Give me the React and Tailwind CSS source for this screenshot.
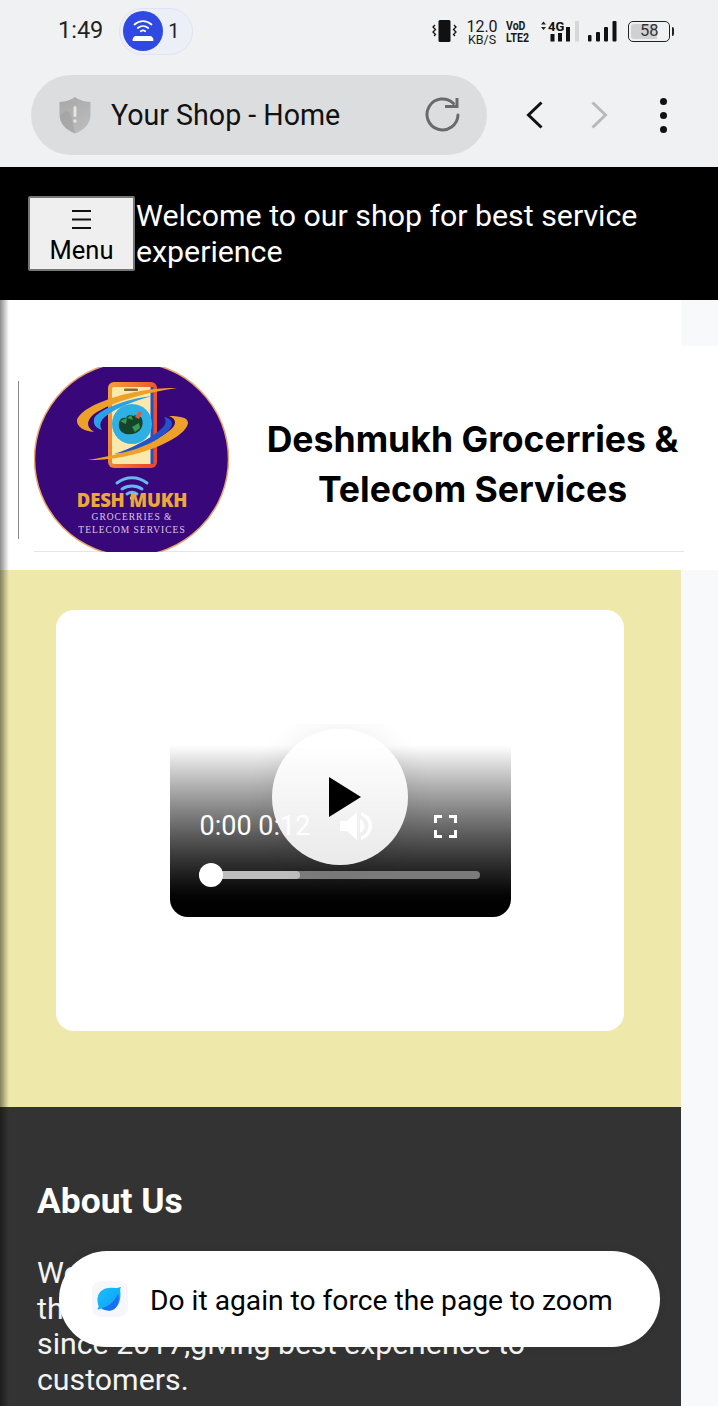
import React from "react";

function WifiPill() {
  return (
    <div className="ml-[16px] flex h-[47px] w-[74px] items-center rounded-full border border-[#dfe3f4] bg-[#eceef8] pl-[3px]">
      <div className="flex h-[40px] w-[40px] items-center justify-center rounded-full bg-[#2f49e2]">
        <svg width="26" height="26" viewBox="0 0 26 26" fill="none">
          <path d="M4.500 6.500c5-4.400 12-4.400 17 0" stroke="#fff" strokeWidth="1.800" strokeLinecap="round" />
          <path d="M7.800 10c3.100-2.600 7.300-2.600 10.400 0" stroke="#fff" strokeWidth="1.800" strokeLinecap="round" />
          <path d="M10.800 13.200c1.400-1 3-1 4.400 0" stroke="#fff" strokeWidth="1.800" strokeLinecap="round" />
          <path d="M5.500 18h15c1.500 0 3 2.500 3 4.200 0 .6-.5.8-1 .8H3.500c-.5 0-1-.2-1-.8C2.500 20.500 4 18 5.500 18z" fill="#fff" />
        </svg>
      </div>
      <span className="ml-[5px] text-[20px] leading-none text-[#222]">1</span>
    </div>
  );
}

function StatusIcons() {
  return (
    <div className="ml-auto mr-[44px] flex items-center text-[#1a1a1a]">
      <svg width="25" height="24" viewBox="0 0 25 24" fill="none">
        <rect x="6.500" y="1" width="12" height="22" rx="1.500" fill="#111" />
        <path d="M3 6l-2 2 2.500 2.500L1 13l2.500 2.500L2 17" stroke="#111" strokeWidth="1.300" />
        <path d="M22 6l2 2-2.500 2.500L24 13l-2.500 2.500L23 17" stroke="#111" strokeWidth="1.300" />
      </svg>
      <div className="ml-[10px] flex w-[30px] translate-y-[1px] flex-col items-center text-center">
        <span className="text-[16px] leading-[14px]">12.0</span>
        <span className="text-[12.500px] leading-[11px]">KB/S</span>
      </div>
      <div className="ml-[9px] flex w-[26px] flex-col font-bold">
        <span className="origin-left scale-x-[0.78] text-[13.500px] leading-[12px]">VoD</span>
        <span className="origin-left scale-x-[0.78] text-[13.500px] leading-[12px]">LTE2</span>
      </div>
      <svg className="ml-[6px]" width="80" height="24" viewBox="539 19 80 24">
        <path d="M542 24.500l2.500-3 2.500 3zM542 27l2.500 3 2.500-3z" fill="#222" />
        <text x="549" y="31" fontSize="13" fontWeight="700" fill="#111" fontFamily="Roboto, sans-serif">4G</text>
        <rect x="551.500" y="34" width="4" height="7.500" fill="#111" />
        <rect x="559" y="33" width="4" height="8.500" fill="#111" />
        <rect x="567" y="27" width="4" height="14.500" fill="#111" />
        <rect x="576" y="21" width="4" height="20.500" fill="#d6d7d9" />
        <rect x="589" y="35" width="3.500" height="6.500" rx="1" fill="#111" />
        <rect x="597" y="32" width="4" height="9.500" rx="1" fill="#111" />
        <rect x="605" y="27" width="4" height="14.500" rx="1" fill="#111" />
        <rect x="613.500" y="21" width="4" height="20.500" rx="1" fill="#111" />
      </svg>
      <div className="ml-[10px] flex items-center">
        <div className="flex h-[21px] w-[42px] items-center rounded-[5px] border border-[#222] p-[2px]">
          <div className="flex h-full w-[26px] items-center rounded-l-[3px] bg-[#d0d1d3]">
            <span className="ml-[9px] text-[16.500px] leading-none text-[#333]">58</span>
          </div>
        </div>
        <div className="ml-[2px] h-[9px] w-[2px] rounded-r-full bg-[#222]" />
      </div>
    </div>
  );
}

function BrowserBar() {
  return (
    <div className="h-[167px] bg-[#f0f1f3]">
      <div className="flex h-[62px] items-center pl-[58px]">
        <span className="text-[23.500px] leading-none text-[#222]">1:49</span>
        <WifiPill />
        <StatusIcons />
      </div>
      <div className="mt-[13px] flex items-center">
        <div className="ml-[31px] flex h-[80px] w-[456px] items-center rounded-full bg-[#dcdddf] pl-[27px] pr-[26px]">
          <svg width="34" height="38" viewBox="0 0 34 38">
            <defs>
              <linearGradient id="shieldFill" x1="0.2" y1="0" x2="0.8" y2="1">
                <stop offset="0" stopColor="#a9a9a9" />
                <stop offset="1" stopColor="#bdbdbd" />
              </linearGradient>
            </defs>
            <path d="M17 1c4 3 9 4.500 15.500 5v13c0 9-7 15.500-15.500 18.500C8.500 34.500 1.500 28 1.500 19V6C8 5.500 13 4 17 1z" fill="url(#shieldFill)" />
            <path d="M2 20c5-6 8-6 10-2s3 11 5 19c-8-3-14-8-15-17z" fill="#989898" opacity="0.45" />
            <rect x="15.500" y="10" width="3" height="11" rx="1.500" fill="#e4e4e4" />
            <circle cx="17" cy="25" r="1.800" fill="#e4e4e4" />
          </svg>
          <span className="ml-[19px] text-[28.600px] leading-none text-[#111]">Your Shop - Home</span>
          <svg className="ml-auto" width="36" height="36" viewBox="0 0 36 36" fill="none">
            <path d="M28.500 6.500A15.500 15.500 0 1 0 33 18" stroke="#6a6a6a" strokeWidth="3" strokeLinecap="round" />
            <path d="M20 9.500h12V1" stroke="#6a6a6a" strokeWidth="3" />
          </svg>
        </div>
        <svg className="ml-[39px]" width="18" height="28" viewBox="0 0 18 28" fill="none">
          <path d="M15.500 1.500 2.500 14l13 12.500" stroke="#111" strokeWidth="3" />
        </svg>
        <svg className="ml-[46px]" width="18" height="28" viewBox="0 0 18 28" fill="none">
          <path d="M2.500 1.500 15.500 14l-13 12.500" stroke="#b9b9b9" strokeWidth="3" />
        </svg>
        <div className="ml-[52px] flex flex-col gap-[7px]">
          <div className="h-[7px] w-[7px] rounded-full bg-[#111]" />
          <div className="h-[7px] w-[7px] rounded-full bg-[#111]" />
          <div className="h-[7px] w-[7px] rounded-full bg-[#111]" />
        </div>
      </div>
    </div>
  );
}

function TopHeader() {
  return (
    <div className="flex h-[133px] items-start bg-black pl-[28px] pt-[29px]">
      <button className="flex h-[75px] w-[107px] flex-col items-center rounded-[2px] border-2 border-[#767676] bg-[#efefef] pt-[12px] text-[25.500px] leading-[30px] text-black">
        <svg width="19" height="19" viewBox="0 0 19 19">
          <path d="M0 1h19M0 9.500h19M0 18h19" stroke="#111" strokeWidth="2" />
        </svg>
        <span className="mt-[6px]">Menu</span>
      </button>
      <p className="ml-px mt-[2px] w-[560px] text-[30.300px] leading-[36px] text-white">
        Welcome to our shop for best service experience
      </p>
    </div>
  );
}

function Logo() {
  return (
    <svg width="195" height="185" viewBox="0 0 195 185" className="shrink-0">
      <defs>
        <clipPath id="logoClip">
          <rect x="0" y="0" width="195" height="185" />
        </clipPath>
        <linearGradient id="phoneFrame" x1="0" y1="0" x2="1" y2="0.4">
          <stop offset="0" stopColor="#f2a23a" />
          <stop offset="1" stopColor="#ef4a2c" />
        </linearGradient>
      </defs>
      <g clipPath="url(#logoClip)">
        <circle cx="97.500" cy="92" r="97" fill="#38087a" stroke="#e8a468" strokeWidth="1.500" />
        <rect x="74" y="15" width="49" height="86" rx="6" fill="url(#phoneFrame)" />
        <rect x="78" y="20" width="41" height="77" rx="2" fill="#fbe9ac" />
        <rect x="116.500" y="20" width="3" height="77" fill="#2452c8" />
        <rect x="90" y="21.500" width="14" height="2.500" rx="1" fill="#8a6a30" />
        <circle cx="98" cy="57" r="20" fill="#2fb0e4" />
        <path d="M85 60c-1-7 3-10 7-9 1-3 5-4 7-2 4-2 8 0 9 3 2 6-1 12-6 14-7 3-16 1-17-6z" fill="#14452c" />
        <path d="M86 54l7-3-1 6zM93 51l4-3 2 5zM98 60l7-4 1 5-5 4z" fill="#3c9a50" />
        <path d="M101 50l4-6 3 2-3 6z" fill="#d9603a" />
        <path d="M143 21C100 20 45 38 43 54c0 6 7 10 17 11-8-5-8-11 0-18 18-12 50-21 83-26z" fill="#eda02a" />
        <path d="M118 29C90 32 62 44 60 52c-1 6 2 9 8 11-3-5-2-9 4-14 12-9 28-15 46-20z" fill="#2c9fe8" />
        <path d="M54 93c46 1 98-21 100-37 0-5-6-7-19-7 8 3 8 9 0 15-17 13-47 24-81 29z" fill="#eda02a" />
        <path d="M80 87c25-3 52-17 57-27 3-5-1-9-7-10 3 4 2 8-4 13-12 10-28 18-46 24z" fill="#2452c8" />
        <g fill="none" stroke="#68b8f0" strokeWidth="3" strokeLinecap="round">
          <path d="M83 116c9-7 21-7 30 0" />
          <path d="M88 122c6-4 14-4 20 0" />
          <path d="M93 127c3-2 7-2 10 0" />
        </g>
        <circle cx="98" cy="131" r="2" fill="#ffffff" />
        <text x="98" y="140" textAnchor="middle" fontSize="18.500" fontWeight="800" fill="#eda63a" fontFamily="'Open Sans', sans-serif" letterSpacing="-0.2">DESH MUKH</text>
        <text x="98" y="153" textAnchor="middle" fontSize="9.500" fill="#d8c8e8" fontFamily="'Liberation Serif', serif" letterSpacing="1">GROCERRIES &amp;</text>
        <text x="98" y="165.500" textAnchor="middle" fontSize="9.500" fill="#d8c8e8" fontFamily="'Liberation Serif', serif" letterSpacing="1">TELECOM SERVICES</text>
      </g>
    </svg>
  );
}

function BrandBanner() {
  return (
    <div className="h-[270px] bg-white">
      <div className="flex h-[46px]">
        <div className="w-[681px] bg-white" />
        <div className="flex-1 bg-[#f8f9fa]" />
      </div>
      <div className="mt-[21px] flex items-center pl-[18px]">
        <div className="h-[158px] w-px bg-[#8a8a8a]" />
        <div className="ml-[15px] flex h-[185px] w-[650px] items-center border-b border-[#e5e6e8]">
          <Logo />
          <h1 className="ml-[16px] mt-[12px] w-[455px] shrink-0 text-center font-['Inter',sans-serif] text-[35.600px] font-bold leading-[50px] text-black">
            Deshmukh Grocerries &amp; Telecom Services
          </h1>
        </div>
      </div>
    </div>
  );
}

function VideoPlayer() {
  return (
    <div className="relative flex h-[193px] w-[341px] flex-col overflow-hidden rounded-b-[18px] bg-gradient-to-b from-white from-[11%] to-black to-[99%] text-white">
      <div className="mt-[88px] flex h-[28px] items-center pl-[30px]">
        <span className="text-[27px] leading-none">0:00 0:12</span>
        <svg className="ml-[30px]" width="33" height="30" viewBox="0 0 33 30" fill="#fff">
          <path d="M0 10h7l10-9v28l-10-9H0z" />
          <path d="M20 8c3 2 4.500 4.500 4.500 7s-1.500 5-4.500 7z" />
          <path d="M21 1c7 2 11 8 11 14s-4 12-11 14v-3.500c5-2 7.500-6 7.500-10.500S26 6.500 21 4.500z" />
        </svg>
        <svg className="ml-[61px]" width="23" height="23" viewBox="0 0 23 23" fill="none">
          <path d="M1.500 8V1.500H8M15 1.500h6.500V8M21.500 15v6.500H15M8 21.500H1.500V15" stroke="#fff" strokeWidth="3" />
        </svg>
      </div>
      <div className="mt-[23px] flex h-[24px] items-center pl-[29px]">
        <div className="relative h-[8px] w-[281px] rounded-full bg-[#7b7b7b]">
          <div className="h-full w-[101px] rounded-full bg-[#bdbdbd]" />
          <div className="absolute left-0 top-[-8px] h-[24px] w-[24px] rounded-full bg-white" />
        </div>
      </div>
      <div className="absolute left-[102px] top-[5px] flex h-[136px] w-[136px] items-center justify-center rounded-full bg-white/90 shadow-[0_0_30px_rgba(0,0,0,0.07)]">
        <svg className="ml-[10px]" width="32" height="40" viewBox="0 0 32 40">
          <path d="M0 0l32 20L0 40z" fill="#000" />
        </svg>
      </div>
    </div>
  );
}

function VideoSection() {
  return (
    <section className="h-[537px] bg-[#eee8aa] pl-[56px] pt-[40px]">
      <div className="flex h-[421px] w-[568px] items-center justify-center rounded-[18px] bg-white">
        <VideoPlayer />
      </div>
    </section>
  );
}

function AboutSection() {
  return (
    <section className="h-[299px] bg-[#333333] pl-[37px] pt-[74px] text-white">
      <h2 className="text-[35.400px] font-bold leading-[40px]">About Us</h2>
      <p className="mt-[34px] text-[30.300px] leading-[35.600px] text-[#f4f4f4]">
        We provide groceries and telecom services
        <br />
        throughout the local area
        <br />
        since 2017,giving best experience to
        <br />
        customers.
      </p>
    </section>
  );
}

function Toast() {
  return (
    <div className="absolute left-[59px] top-[1251px] flex h-[96px] w-[601px] items-center rounded-full bg-white pl-[33px] shadow-[0_0_12px_rgba(0,0,0,0.04)]">
      <div className="flex h-[36px] w-[36px] items-center justify-center rounded-[9px] bg-[#f5f7fa]">
        <svg width="26" height="26" viewBox="0 0 26 26">
          <defs>
            <linearGradient id="leafTop" x1="0" y1="0" x2="1" y2="1">
              <stop offset="0" stopColor="#17c3fb" />
              <stop offset="1" stopColor="#0f9cf5" />
            </linearGradient>
          </defs>
          <path d="M4 5c3-3 9-4 14-3 2 .3 5-1 6-1-.5 1-1 3-.7 5 .7 6-1 13-5.300 16-4 2.700-11 2.600-14 .5-1 .5-2.500 1-3.500 1.200.2-1 .8-2.300 1.200-3.200C-.5 15 0 9 4 5z" fill="url(#leafTop)" />
          <path d="M5 22c6-1 12-6 16-14 2 6 0 12-3.500 15-3.500 2.500-9 2.500-12.500-1z" fill="#1a6ef0" />
        </svg>
      </div>
      <span className="ml-[22px] pt-[4px] text-[28.200px] leading-none text-black">Do it again to force the page to zoom</span>
    </div>
  );
}

export default function App() {
  return (
    <div className="relative h-[1406px] w-[718px] overflow-hidden bg-[#f8f9fa] font-['Roboto',sans-serif]">
      <BrowserBar />
      <TopHeader />
      <BrandBanner />
      <div className="w-[681px]">
        <VideoSection />
        <AboutSection />
      </div>
      {/* edge shadow of the side drawer */}
      <div className="absolute bottom-0 left-0 top-[300px] w-[9px] bg-gradient-to-r from-black/45 to-transparent" />
      <Toast />
    </div>
  );
}
